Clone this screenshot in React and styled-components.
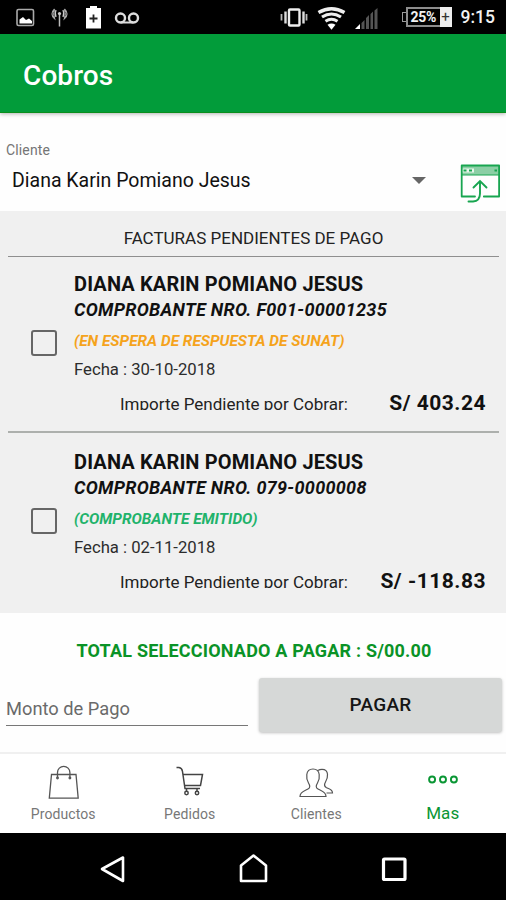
import React, { useState } from 'react';
import styled, { createGlobalStyle } from 'styled-components';

const GlobalStyle = createGlobalStyle`
  * {
    box-sizing: border-box;
  }

  body {
    margin: 0;
    background: #fff;
    font-family: Roboto, 'Liberation Sans', sans-serif;
  }
`;

const Screen = styled.div`
  display: flex;
  flex-direction: column;
  width: 506px;
  height: 900px;
  overflow: hidden;
  background: #fefefe;
  color: #111;
`;

const StyledStatusBar = styled.div`
  display: flex;
  justify-content: space-between;
  flex: none;
  height: 34px;
  padding: 0 11px 0 15px;
  background: #000;
  color: #f2f2f2;

  svg {
    display: block;
    height: 34px;
  }
`;

const StatusGroup = styled.div`
  display: flex;
  align-items: center;
  gap: ${({ $gap }) => $gap}px;
`;

const Battery = styled.div`
  display: flex;
  align-items: center;
  width: 50px;
  height: 20px;
  margin-left: 14px;

  .nub {
    width: 4px;
    height: 10px;
    border: 1.5px solid #999;
    border-right: 0;
  }

  .level {
    width: 34px;
    height: 20px;
    padding-left: 3px;
    border: 2px solid #8d8d8d;
    border-right: 0;
    font-size: 14px;
    font-weight: 700;
    line-height: 16px;
    letter-spacing: -0.3px;
  }

  .charge {
    width: 12px;
    height: 20px;
    background: #eee;
    color: #333;
    font-size: 15px;
    line-height: 21px;
    text-align: center;
  }
`;

const Clock = styled.span`
  font-size: 17.5px;
  font-weight: 500;
  line-height: 34px;
`;

const AppBar = styled.header`
  z-index: 1;
  flex: none;
  height: 79px;
  padding-left: 23px;
  background: #029c3a;
  border-bottom: 1px solid #0a8f1c;
  box-shadow: 0 1px 4px rgba(0, 0, 0, 0.3);

  h1 {
    margin: 0;
    color: #fff;
    font-size: 28px;
    font-weight: 500;
    line-height: 83px;
    letter-spacing: 0.1px;
  }
`;

const ClientPicker = styled.section`
  flex: 0 0 98px;
  padding: 27px 5px 0 6px;

  label {
    display: block;
    color: #757575;
    font-size: 14px;
    line-height: 20px;
    letter-spacing: 0.15px;
  }
`;

const PickerRow = styled.div`
  display: flex;
  align-items: center;
  height: 40px;
  padding-left: 6px;

  .name {
    flex: 1;
    font-size: 19.5px;
  }

  .arrow {
    margin-right: 33px;
  }

  .export {
    position: relative;
    top: 3px;
  }
`;

const InvoiceList = styled.section`
  flex: 0 0 402px;
  padding: 0 7px 0 8px;
  background: #f0f0f0;
`;

const ListTitle = styled.h2`
  height: 46px;
  margin: 0;
  border-bottom: 1px solid #8f8f8f;
  font-size: 17px;
  font-weight: 400;
  line-height: 54px;
  text-align: center;
  color: #222;
`;

const Divider = styled.div`
  height: 2px;
  margin-bottom: 2px;
  background: #adb0ad;
`;

const StyledInvoice = styled.article`
  display: flex;
  height: 174px;
  padding-top: 14px;
`;

const Checkbox = styled.button`
  flex: none;
  width: 26px;
  height: 26px;
  margin: 59px 17px 0 23px;
  padding: 0;
  border: 2px solid #666;
  border-radius: 3px;
  background: ${({ $checked }) => ($checked ? '#029c3a' : 'transparent')};
`;

const InvoiceBody = styled.div`
  flex: 1;
  padding-right: 13px;

  .holder {
    font-size: 20px;
    font-weight: 700;
    line-height: 26px;
    letter-spacing: 0.14px;
  }

  .number {
    font-size: 18px;
    font-style: italic;
    font-weight: 700;
    line-height: 26px;
    letter-spacing: 0.3px;
  }

  .date {
    margin-top: 8px;
    color: #2c2c2c;
    font-size: 16.7px;
    line-height: 20px;
  }
`;

const InvoiceStatus = styled.div`
  margin-top: 7px;
  color: ${({ $color }) => $color};
  font-size: 15.4px;
  font-style: italic;
  font-weight: 700;
  line-height: 22px;
`;

const AmountRow = styled.div`
  display: flex;
  justify-content: space-between;
  align-items: flex-start;
  margin-top: 10px;
  padding-left: 46px;

  /* the label is taller than its box, descenders get cut off */
  .caption {
    height: 20px;
    overflow: hidden;
    color: #222;
    font-size: 17px;
    line-height: 29px;
  }

  .amount {
    font-size: 21px;
    font-weight: 700;
    line-height: 26px;
    letter-spacing: 0.5px;
  }
`;

const PaymentPanel = styled.section`
  flex: 0 0 139px;
  padding: 26px 4px 0 6px;
`;

const Total = styled.div`
  color: #0a9327;
  font-size: 18px;
  font-weight: 700;
  line-height: 24px;
  letter-spacing: 0.2px;
  text-align: center;
`;

const PaymentRow = styled.div`
  display: flex;
  justify-content: space-between;
  margin-top: 15px;
`;

const AmountField = styled.div`
  width: 242px;
  height: 48px;
  border-bottom: 1px solid #777;
  color: #6a6a6a;
  font-size: 18.3px;
  line-height: 62px;
`;

const PayButton = styled.button`
  width: 243px;
  height: 54px;
  padding: 0 0 2px;
  border: 0;
  border-radius: 3px;
  background: #d6d8d7;
  box-shadow: 0 1px 3px rgba(0, 0, 0, 0.25);
  color: #151515;
  font-family: inherit;
  font-size: 19px;
  font-weight: 500;
  letter-spacing: 0.3px;
`;

const StyledTabBar = styled.nav`
  display: grid;
  grid-template-columns: repeat(4, 1fr);
  flex: 0 0 81px;
  border-top: 2px solid #f0f0f0;
  background: #fff;
`;

const Tab = styled.div`
  display: flex;
  flex-direction: column;
  align-items: center;
  padding-top: 9px;
  color: ${({ $active }) => ($active ? '#0a9634' : '#777')};
  font-size: ${({ $active }) => ($active ? 17 : 14)}px;
  line-height: 20px;
  letter-spacing: 0.1px;

  svg {
    display: block;
    margin-bottom: 2px;
  }
`;

const SystemNav = styled.footer`
  display: flex;
  justify-content: center;
  flex: 0 0 67px;
  background: #000;

  svg {
    display: block;
    width: 141px;
    height: 67px;
  }
`;

const StatusBar = () => (
  <StyledStatusBar>
    <StatusGroup $gap={0}>
      <svg width="126" viewBox="15 0 126 34" fill="none">
        <rect x="17" y="9.5" width="16.5" height="16" rx="1.5" stroke="#aaa" strokeWidth="1.6" />
        <path d="M19.5 23.5v-4l3.500-2.500 3 3 3-1.500 3 2.500v2.500z" fill="#fff" />
        <path d="M59.500 14v12.500" stroke="#bbb" strokeWidth="1.500" />
        <circle cx="59.500" cy="13.500" r="1.600" fill="#ccc" />
        <path d="M56 10q-1.500 3.500 0 7M63 10q1.500 3.500 0 7" stroke="#ccc" strokeWidth="1.300" />
        <path d="M54.500 9q-5 5 0 9.500-1.500-4.500 0-9.500M64.500 9q5 5 0 9.500 1.500-4.500 0-9.500" stroke="#aaa" strokeWidth="1.200" />
        <path d="M86 8h4V6h7v2h4v20.500H86z" fill="#fff" />
        <path d="M89.500 18.500h8M93.500 14.500v8" stroke="#222" strokeWidth="1.800" />
        <circle cx="120.500" cy="18" r="4.500" stroke="#ddd" strokeWidth="2.400" />
        <circle cx="133.500" cy="18" r="4.500" stroke="#ddd" strokeWidth="2.400" />
        <path d="M121 22.500h12" stroke="#ddd" strokeWidth="2" />
      </svg>
    </StatusGroup>
    <StatusGroup $gap={9}>
      <svg width="100" viewBox="280 0 100 34" fill="none">
        <rect x="290" y="9.500" width="10.500" height="16" rx="1" stroke="#eee" strokeWidth="2.400" />
        <path d="M286.500 11.500v12M304.500 11.500v12" stroke="#ddd" strokeWidth="2.400" />
        <path d="M282.500 14v6.500M307.500 14v6.500" stroke="#bbb" strokeWidth="1.800" />
        <path d="M319.500 12.500q13-7.500 26 0" stroke="#eee" strokeWidth="3.400" />
        <path d="M323 17q9.500-6 19 0" stroke="#eee" strokeWidth="3.200" />
        <path d="M326.500 21.300q6-4 12 0" stroke="#eee" strokeWidth="3" />
        <path d="M328.500 24.800q4-2.500 8 0l-4 5z" fill="#fff" />
        <path d="M356 29l5-5v5z" fill="#fff" />
        <path d="M362.500 29v-6l3-3v9zM367 29V18l3-3v14zM371.500 29V14l2.500-2.500V29zM375.500 29V10.500l3-2.500v21z" fill="#555" />
      </svg>
      <Battery>
        <span className="nub" />
        <span className="level">25%</span>
        <span className="charge">+</span>
      </Battery>
      <Clock>9:15</Clock>
    </StatusGroup>
  </StyledStatusBar>
);

const invoices = [
  {
    holder: 'DIANA KARIN POMIANO JESUS',
    number: 'F001-00001235',
    status: '(EN ESPERA DE RESPUESTA DE SUNAT)',
    color: '#f5a31c',
    date: '30-10-2018',
    amount: '403.24',
  },
  {
    holder: 'DIANA KARIN POMIANO JESUS',
    number: '079-0000008',
    status: '(COMPROBANTE EMITIDO)',
    color: '#1fb36b',
    date: '02-11-2018',
    amount: '-118.83',
  },
];

const Invoice = ({ invoice }) => {
  const [checked, setChecked] = useState(false);

  return (
    <StyledInvoice>
      <Checkbox $checked={checked} onClick={() => setChecked(!checked)} />
      <InvoiceBody>
        <div className="holder">{invoice.holder}</div>
        <div className="number">COMPROBANTE NRO. {invoice.number}</div>
        <InvoiceStatus $color={invoice.color}>{invoice.status}</InvoiceStatus>
        <div className="date">Fecha : {invoice.date}</div>
        <AmountRow>
          <span className="caption">Importe Pendiente por Cobrar:</span>
          <span className="amount">S/ {invoice.amount}</span>
        </AmountRow>
      </InvoiceBody>
    </StyledInvoice>
  );
};

const tabIcon = name => {
  switch (name) {
    case 'Productos':
      return (
        <svg width="34" height="39" viewBox="46 763 34 39" fill="none" stroke="#555" strokeWidth="1.300">
          <path d="M51.500 774.500h24.500l2.200 23.700H49.300z" />
          <path d="M57.500 778v-5.500a6.200 6.200 0 0 1 12.400 0v5.500" />
          <circle cx="57.500" cy="778" r="0.800" />
          <circle cx="69.900" cy="778" r="0.800" />
        </svg>
      );
    case 'Pedidos':
      return (
        <svg width="34" height="39" viewBox="173 763 34 39" fill="none" stroke="#444" strokeWidth="1.500">
          <path d="M176.500 767.500h2.500q3 .5 3.500 4l2.500 17h15" />
          <path d="M183 774.500h19.500l-2 11h-15.500" />
          <circle cx="186.500" cy="793" r="1.700" />
          <circle cx="197" cy="793" r="1.700" />
          <path d="M186.500 788.500v3M197 788.500v3" />
        </svg>
      );
    case 'Clientes':
      return (
        <svg width="38" height="39" viewBox="297.500 763 38 39" fill="none" stroke="#555" strokeWidth="1.200">
          <path d="M300.500 796.500c0-5 4.500-5.500 8-7.500 2.500-1.500 2-3.500.5-6-1.800-3-2.200-5-1.700-8.500.4-3.600 2.700-5.500 6.200-5.500s5.800 1.900 6.200 5.500c.5 3.500.1 5.500-1.700 8.500-1.500 2.500-2 4.500.5 6 3.500 2 8 2.500 8 7.500z" />
          <path d="M318.500 770.500c1.300-1 2.500-1.200 4-1.200 3.500 0 5.300 1.900 5.500 5 .3 3.200-.3 5-2 7.700-1.300 2.300-1.500 4.200.7 5.500 3 1.600 6.300 1.500 6.300 5.500h-6" />
        </svg>
      );
    default:
      return (
        <svg width="34" height="38" viewBox="426.300 763 34 38" fill="none" stroke="#0a9634" strokeWidth="1.900">
          <circle cx="432.400" cy="779.500" r="3" />
          <circle cx="443.300" cy="779.500" r="3" />
          <circle cx="454.200" cy="779.500" r="3" />
        </svg>
      );
  }
};

const tabs = ['Productos', 'Pedidos', 'Clientes', 'Mas'];

const App = () => (
  <>
    <GlobalStyle />
    <Screen>
      <StatusBar />
      <AppBar>
        <h1>Cobros</h1>
      </AppBar>
      <ClientPicker>
        <label>Cliente</label>
        <PickerRow>
          <span className="name">Diana Karin Pomiano Jesus</span>
          <svg className="arrow" width="14" height="7" viewBox="0 0 14 7">
            <path d="M0 0h14L7 7z" fill="#666" />
          </svg>
          <svg className="export" width="42" height="40" viewBox="459 163 42 40" fill="none" stroke="#18a550">
            <path d="M461 166h38v9h-38z" fill="#8bcfa5" stroke="none" />
            <path d="M462 168.500h12v4h-12z" fill="#e8f6ec" stroke="none" />
            <path d="M475 196.500h-13.300V165.500h37.400v31h-15.300" strokeWidth="1.800" strokeLinejoin="round" strokeLinecap="round" />
            <path d="M461.500 175h37.500" strokeWidth="1" />
            <path d="M463.500 170.500h3M469 170.500h3M494.500 170.500h2.500" strokeWidth="2" />
            <path d="M473.500 187.500l6.500-6.500 6.500 6.500M480 181.500v12q0 7.500-7 8h-4.500" strokeWidth="1.900" strokeLinecap="round" />
          </svg>
        </PickerRow>
      </ClientPicker>
      <InvoiceList>
        <ListTitle>FACTURAS PENDIENTES DE PAGO</ListTitle>
        <Invoice invoice={invoices[0]} />
        <Divider />
        <Invoice invoice={invoices[1]} />
      </InvoiceList>
      <PaymentPanel>
        <Total>TOTAL SELECCIONADO A PAGAR : S/00.00</Total>
        <PaymentRow>
          <AmountField>Monto de Pago</AmountField>
          <PayButton>PAGAR</PayButton>
        </PaymentRow>
      </PaymentPanel>
      <StyledTabBar>
        {tabs.map(tab => (
          <Tab key={tab} $active={tab === 'Mas'}>
            {tabIcon(tab)}
            {tab}
          </Tab>
        ))}
      </StyledTabBar>
      <SystemNav>
        <svg viewBox="42.500 833 141 67" fill="none" stroke="#fff" strokeWidth="2.600">
          <path d="M123.500 857.500v23.500L102.500 869z" strokeLinejoin="round" />
        </svg>
        <svg viewBox="183.500 833 141 67" fill="none" stroke="#fff" strokeWidth="2.600">
          <path d="M241.500 881v-15.500l12.500-10 12.500 10V881z" strokeLinejoin="round" />
        </svg>
        <svg viewBox="324.500 833 141 67" fill="none" stroke="#fff" strokeWidth="3.200">
          <rect x="384" y="859" width="21.500" height="20.500" rx="1" />
        </svg>
      </SystemNav>
    </Screen>
  </>
);

export default App;
